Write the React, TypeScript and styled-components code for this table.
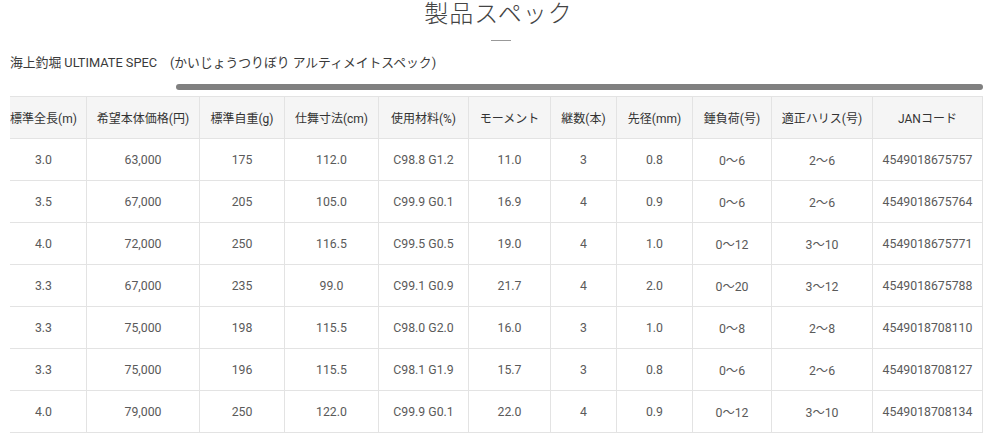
import React, {useLayoutEffect, useRef, useState} from 'react';
import styled, {createGlobalStyle} from "styled-components";

const GlobalStyle = createGlobalStyle`
  body {
    margin: 0;
    background: #fff;
    font-family: Roboto, "Noto Sans CJK JP", sans-serif;
    color: #333;
  }
`

const Container = styled.div`
  padding: 0 5px 0 10px;
`

const Title = styled.h1`
  margin: 0;
  font-family: "Noto Sans CJK JP", sans-serif;
  font-size: 24px;
  line-height: 24px;
  font-weight: 300;
  letter-spacing: 1px;
  color: #444;
  text-align: center;
  padding-left: 4px;
`

const Rule = styled.div`
  width: 20px;
  height: 1px;
  background: #999;
  margin: 16px auto 0;
  position: relative;
  left: 4px;
`

const SubTitle = styled.p`
  margin: 12px 0 0;
  font-size: 12.8px;
  line-height: 20px;
  color: #3a3a3a;
`

const Track = styled.div`
  margin-top: 11px;
  height: 6px;
  position: relative;
`

const Thumb = styled.div`
  position: absolute;
  top: 0;
  height: 6px;
  background: #808080;
  border-radius: 3px;
`

const Scroller = styled.div`
  margin-top: 6px;
  overflow-x: auto;
  scrollbar-width: none;

  &::-webkit-scrollbar {
    display: none;
  }
`

const Table = styled.table`
  table-layout: fixed;
  border-collapse: collapse;
  width: 1172px;
  font-size: 12px;
`

const Th = styled.th`
  height: 41px;
  padding: 0 4px;
  background: #f5f5f5;
  border: 1px solid #e3e3e3;
  font-weight: 400;
  color: #333;
  text-align: center;
  white-space: nowrap;
`

const Td = styled.td`
  height: 41px;
  padding: 0 4px;
  border: 1px solid #e3e3e3;
  color: #5a5a5a;
  font-size: 12.3px;
  text-align: center;
  white-space: nowrap;
`

const widths = [190, 86, 113, 85, 94, 90, 82, 66, 76, 79, 101, 110]

const heads = ['品名', '標準全長(m)', '希望本体価格(円)', '標準自重(g)', '仕舞寸法(cm)', '使用材料(%)', 'モーメント', '継数(本)', '先径(mm)', '錘負荷(号)', '適正ハリス(号)', 'JANコード']

const rows = [
  ['海上釣堀 ULTIMATE SPEC 300', '3.0', '63,000', '175', '112.0', 'C98.8 G1.2', '11.0', '3', '0.8', '0～6', '2～6', '4549018675757'],
  ['海上釣堀 ULTIMATE SPEC 350', '3.5', '67,000', '205', '105.0', 'C99.9 G0.1', '16.9', '4', '0.9', '0～6', '2～6', '4549018675764'],
  ['海上釣堀 ULTIMATE SPEC 400', '4.0', '72,000', '250', '116.5', 'C99.5 G0.5', '19.0', '4', '1.0', '0～12', '3～10', '4549018675771'],
  ['海上釣堀 ULTIMATE SPEC 330', '3.3', '67,000', '235', '99.0', 'C99.1 G0.9', '21.7', '4', '2.0', '0～20', '3～12', '4549018675788'],
  ['海上釣堀 ULTIMATE SPEC 330L', '3.3', '75,000', '198', '115.5', 'C98.0 G2.0', '16.0', '3', '1.0', '0～8', '2～8', '4549018708110'],
  ['海上釣堀 ULTIMATE SPEC 330M', '3.3', '75,000', '196', '115.5', 'C98.1 G1.9', '15.7', '3', '0.8', '0～6', '2～6', '4549018708127'],
  ['海上釣堀 ULTIMATE SPEC 400H', '4.0', '79,000', '250', '122.0', 'C99.9 G0.1', '22.0', '4', '0.9', '0～12', '3～10', '4549018708134'],
]

function App() {
  const scrollRef = useRef<HTMLDivElement>(null)
  const [thumb, setThumb] = useState({left: 0, width: 0})

  const syncThumb = () => {
    const el = scrollRef.current
    if (!el) return
    const ratio = el.clientWidth / el.scrollWidth
    setThumb({left: el.scrollLeft * ratio, width: el.clientWidth * ratio})
  }

  // the page shows the table scrolled all the way to the right
  useLayoutEffect(() => {
    const el = scrollRef.current
    if (el) el.scrollLeft = el.scrollWidth
    syncThumb()
  }, [])

  return (
    <Container>
      <GlobalStyle/>
      <Title>製品スペック</Title>
      <Rule/>
      <SubTitle>海上釣堀 ULTIMATE SPEC　(かいじょうつりぼり アルティメイトスペック)</SubTitle>
      <Track>
        <Thumb style={{left: thumb.left, width: thumb.width}}/>
      </Track>
      <Scroller ref={scrollRef} onScroll={syncThumb}>
        <Table>
          <colgroup>
            {widths.map((w, i) => <col key={i} style={{width: w}}/>)}
          </colgroup>
          <thead>
            <tr>
              {heads.map(h => <Th key={h}>{h}</Th>)}
            </tr>
          </thead>
          <tbody>
            {rows.map(r => (
              <tr key={r[11]}>
                {r.map((c, i) => <Td key={i}>{c}</Td>)}
              </tr>
            ))}
          </tbody>
        </Table>
      </Scroller>
    </Container>
  );
}

export default App;
